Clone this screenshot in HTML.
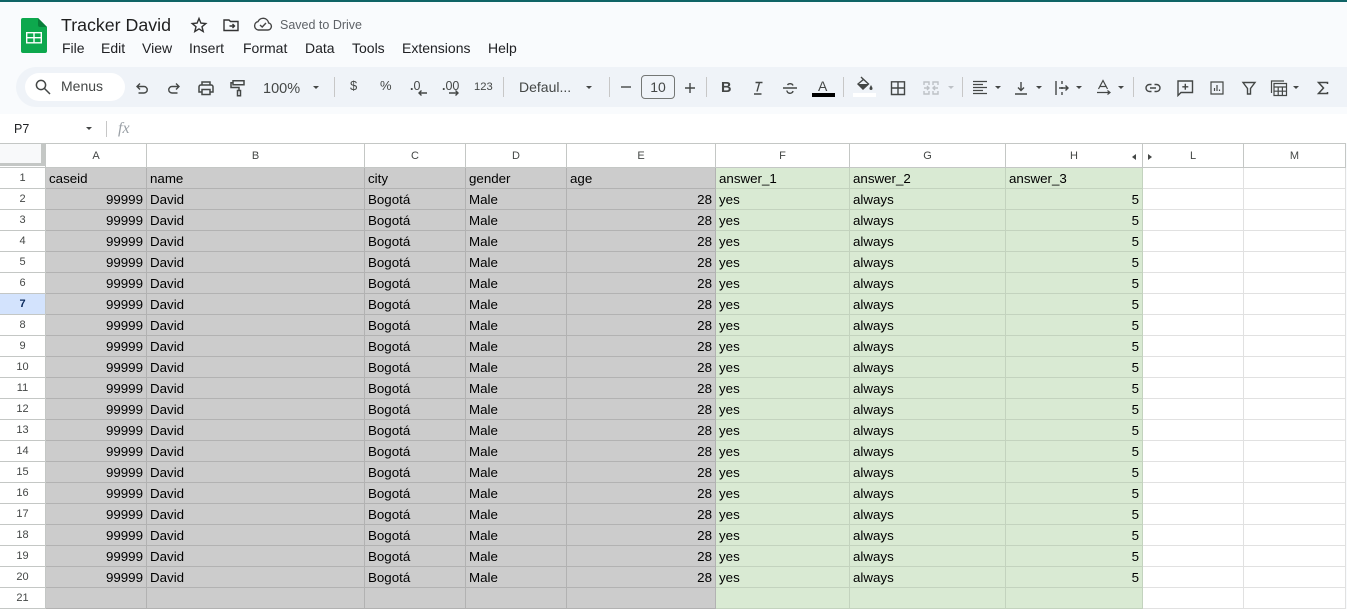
<!DOCTYPE html>
<html lang="en">
<head>
<meta charset="utf-8">
<title>Tracker David</title>
<style>
html,body{margin:0;padding:0;width:1347px;height:606px;overflow:hidden;background:#f9fbfd;font-family:"Liberation Sans",Arial,sans-serif;color:#1f1f1f}
.a{position:absolute;white-space:nowrap}
#topbar{left:0;top:0;width:1347px;height:2px;background:#0f6466}
.m{top:40px;font-size:14px;line-height:17px;color:#202124}
#tb{left:16px;top:67px;width:1331px;height:40px;background:#eff3f8;border-radius:20px 0 0 20px}
#search{left:25px;top:73px;width:100px;height:28px;background:#fff;border-radius:14px}
.t{color:#444746;font-size:14px;line-height:16px}
.sep{top:77px;width:1px;height:20px;background:#c7c7c7}
svg.i{position:absolute;fill:none;stroke:#444746;stroke-width:1.4}
.car{position:absolute;width:0;height:0;border-left:3.5px solid transparent;border-right:3.5px solid transparent;border-top:3.5px solid #444746;top:86px}
#fx{left:0;top:114px;width:1347px;height:29px;background:#fff}
table{position:absolute;left:0;top:143px;border-collapse:separate;border-spacing:0;table-layout:fixed;width:1346px;font-size:13.33px;background:#fff}
td,th{box-sizing:border-box;padding:0;overflow:hidden;white-space:nowrap;font-weight:normal}
thead th{height:25px;border-top:1px solid #c4c7c5;border-right:1px solid #c4c7c5;border-bottom:1px solid #c4c7c5;background:#fff;font-size:11px;color:#444746;padding-top:1px}
tbody th{height:21px;border-right:1px solid #c4c7c5;border-bottom:1px solid #c4c7c5;background:#fff;font-size:11px;color:#444746}
td{height:21px;border-right:1px solid #e1e1e1;border-bottom:1px solid #e1e1e1;padding:2px 3px 0;color:#000;line-height:18px}
td.g{background:#cccccc;border-color:#b2b2b2}
td.v{background:#d9ead3;border-color:#c3d3be}
td.r{text-align:right}
tr.s th{background:#d3e3fd;font-weight:bold;color:#0b2a5c}
</style>
</head>
<body>
<div class="a" id="topbar"></div>

<svg class="a" style="left:21px;top:18px" width="26" height="35" viewBox="0 0 26 35"><path d="M2 0H17L26 9V33a2 2 0 0 1-2 2H2a2 2 0 0 1-2-2V2A2 2 0 0 1 2 0Z" fill="#0da84d"/><path d="M17 0L26 9H19a2 2 0 0 1-2-2Z" fill="#087f3a"/><path d="M5 14H21V25.5H5Z M6.4 15.4V19H12.3V15.4Z M13.7 15.4V19H19.6V15.4Z M6.4 20.4V24.1H12.3V20.4Z M13.7 20.4V24.1H19.6V20.4Z" fill="#fff" fill-rule="evenodd"/></svg>

<div class="a" style="left:61px;top:14px;font-size:17.8px;line-height:22px;color:#1f1f1f">Tracker David</div>
<svg class="i" style="left:190px;top:16px;stroke:#333;stroke-width:1.4" width="18" height="18" viewBox="0 0 18 18"><path d="M9 2.5L10.9 7.1L15.8 7.5L12 10.7L13.2 15.5L9 12.9L4.8 15.5L6 10.7L2.2 7.5L7.1 7.1Z"/></svg>
<svg class="i" style="left:222px;top:16px;stroke:#333;stroke-width:1.4" width="18" height="18" viewBox="0 0 18 18"><path d="M2 4H7L8.5 5.5H16V14.5H2Z M7.5 10H12 M10.5 8L12.5 10L10.5 12"/></svg>
<svg class="i" style="left:253px;top:15px;stroke:#444;stroke-width:1.4" width="20" height="18" viewBox="0 0 20 18"><path d="M5 15H15a3.6 3.6 0 0 0 .6-7.1A5.6 5.6 0 0 0 5 6.6A4.3 4.3 0 0 0 5 15Z M7 10L9.2 12L13 8"/></svg>
<div class="a" style="left:280px;top:17px;font-size:12.5px;line-height:16px;color:#5f6368">Saved to Drive</div>

<div class="a m" style="left:62px">File</div>
<div class="a m" style="left:101px">Edit</div>
<div class="a m" style="left:142px">View</div>
<div class="a m" style="left:189px">Insert</div>
<div class="a m" style="left:243px">Format</div>
<div class="a m" style="left:305px">Data</div>
<div class="a m" style="left:352px">Tools</div>
<div class="a m" style="left:402px">Extensions</div>
<div class="a m" style="left:488px">Help</div>

<div class="a" id="tb"></div>
<div class="a" id="search"></div>
<svg class="i" style="left:34px;top:78px;stroke-width:1.5" width="18" height="18" viewBox="0 0 18 18"><circle cx="7" cy="7" r="4.6"/><path d="M10.5 10.5L16 16"/></svg>
<div class="a t" style="left:61px;top:78px">Menus</div>

<svg class="i" style="left:133px;top:79px" width="18" height="18" viewBox="0 0 18 18"><path d="M7 4.5L4 7.5L7 10.5 M4 7.5H11a3.2 3.2 0 0 1 0 6.5H5.5"/></svg>
<svg class="i" style="left:165px;top:79px" width="18" height="18" viewBox="0 0 18 18"><path d="M11 4.5L14 7.5L11 10.5 M14 7.5H7a3.2 3.2 0 0 0 0 6.5H12.5"/></svg>
<svg class="i" style="left:197px;top:79px;stroke-width:1.5" width="18" height="18" viewBox="0 0 18 18"><path d="M5 6V3H13V6 M5 13H2V7.8A1.8 1.8 0 0 1 3.8 6H14.2A1.8 1.8 0 0 1 16 7.8V13H13 M5 10.5H13V15.5H5Z"/></svg>
<svg class="i" style="left:229px;top:79px;stroke-width:1.5" width="18" height="18" viewBox="0 0 18 18"><path d="M4 1.8H15V5.8H4Z M4 3.8H2V8.5H10V11.5 M8.5 11.5H11.5V16.8H8.5Z"/></svg>
<div class="a t" style="left:263px;top:81px;font-size:14.5px">100%</div>
<div class="car" style="left:313px"></div>
<div class="a sep" style="left:334px"></div>
<div class="a t" style="left:350px;top:78px;font-size:13px">$</div>
<div class="a t" style="left:380px;top:78px;font-size:13px">%</div>
<div class="a t" style="left:410px;top:78px;font-size:12.5px"><b>.</b>0</div>
<svg class="i" style="left:416px;top:88px" width="12" height="10" viewBox="0 0 12 10"><path d="M11 5H3 M5.5 2.5L3 5L5.5 7.5"/></svg>
<div class="a t" style="left:442px;top:78px;font-size:12.5px"><b>.</b>00</div>
<svg class="i" style="left:447px;top:88px" width="14" height="10" viewBox="0 0 14 10"><path d="M2 5H11 M8.5 2.5L11 5L8.5 7.5"/></svg>
<div class="a t" style="left:474px;top:79px;font-size:11.2px">123</div>
<div class="a sep" style="left:503px"></div>
<div class="a t" style="left:519px;top:79px;font-size:14px">Defaul...</div>
<div class="car" style="left:586px"></div>
<div class="a sep" style="left:609px"></div>
<svg class="i" style="left:619px;top:80px" width="14" height="14" viewBox="0 0 14 14"><path d="M2 7H12"/></svg>
<div class="a t" style="left:641px;top:75px;width:32px;height:22px;border:1px solid #747775;border-radius:4px;text-align:center;line-height:22px;font-size:14px">10</div>
<svg class="i" style="left:683px;top:81px" width="14" height="14" viewBox="0 0 14 14"><path d="M2 7H12 M7 2V12"/></svg>
<div class="a sep" style="left:706px"></div>
<div class="a t" style="left:721px;top:80px;font-size:14.5px;font-weight:bold">B</div>
<svg class="i" style="left:750px;top:80px" width="16" height="16" viewBox="0 0 16 16"><path d="M5.5 2.5H12.5 M9.5 2.5L7 11.5 M4 14H11.5"/></svg>
<svg class="i" style="left:782px;top:80px" width="16" height="16" viewBox="0 0 16 16"><path d="M1 8H15 M11 5.5A3 2.5 0 0 0 5.5 5 M5 10.5A3 2.5 0 0 0 11 11"/></svg>
<div class="a t" style="left:818px;top:78px;font-size:14px">A</div>
<div class="a" style="left:812px;top:93px;width:23px;height:4px;background:#000"></div>
<div class="a sep" style="left:843px"></div>
<svg class="a" style="left:856px;top:76px" width="18" height="16" viewBox="0 0 18 16"><path d="M5 1L6 2L12.5 8L7 13L2 8L8 3" fill="none" stroke="#444746" stroke-width="1.4"/><path d="M2.5 8H12.5L7 13Z" fill="#444746"/><path d="M15 9C16 11 16.5 11.5 16.5 12.5A1.5 1.5 0 0 1 13.5 12.5C13.5 11.5 14 11 15 9Z" fill="#444746"/></svg>
<div class="a" style="left:853px;top:93px;width:23px;height:4px;background:#fff"></div>
<svg class="i" style="left:889px;top:79px" width="18" height="18" viewBox="0 0 18 18"><path d="M2.5 2.8H15.5V15.5H2.5Z M9 2.8V15.5 M2.5 9H15.5"/></svg>
<svg class="i" style="left:922px;top:80px;stroke:#bdc1c6" width="18" height="16" viewBox="0 0 18 16"><path d="M2 5V2H7V5 M11 5V2H16V5 M2 11V14H7V11 M11 11V14H16V11 M2 8H7 M5 6L7 8L5 10 M16 8H11 M13 6L11 8L13 10"/></svg>
<div class="car" style="left:948px;border-top-color:#bdc1c6"></div>
<div class="a sep" style="left:962px"></div>
<svg class="i" style="left:972px;top:80px;stroke-width:1.2" width="16" height="16" viewBox="0 0 16 16"><path d="M1 1.5H15 M1 4.5H11 M1 7.5H15 M1 10.5H11 M1 13.5H15"/></svg>
<div class="car" style="left:995px"></div>
<svg class="i" style="left:1013px;top:80px" width="16" height="16" viewBox="0 0 16 16"><path d="M8 2V10.5 M5 7.5L8 10.5L11 7.5 M2 14H14"/></svg>
<div class="car" style="left:1036px"></div>
<svg class="i" style="left:1054px;top:80px" width="16" height="16" viewBox="0 0 16 16"><path d="M2 1V15 M8 1V4 M8 7V9 M8 12V15 M5 8H14 M11.5 5.5L14 8L11.5 10.5"/></svg>
<div class="car" style="left:1076px"></div>
<svg class="i" style="left:1096px;top:79px;stroke-width:1.2" width="16" height="18" viewBox="0 0 16 18"><path d="M2.5 10L7 1.5L11.5 10 M4 7.5H10 M1 13.5H13.5 M11.5 11.5L14 13.5L11.5 15.5"/></svg>
<div class="car" style="left:1118px"></div>
<div class="a sep" style="left:1133px"></div>
<svg class="i" style="left:1144px;top:79px" width="18" height="18" viewBox="0 0 18 18"><path d="M7.5 5.5H5.5a3.5 3.5 0 0 0 0 7H7.5 M10.5 5.5H12.5a3.5 3.5 0 0 1 0 7H10.5 M6 9H12"/></svg>
<svg class="i" style="left:1176px;top:79px" width="18" height="18" viewBox="0 0 18 18"><path d="M2 2H16.5V13.5H5L2 16.5Z M9.3 4.8V10.8 M6.3 7.8H12.3"/></svg>
<svg class="i" style="left:1208px;top:79px;stroke-width:1.2" width="18" height="18" viewBox="0 0 18 18"><path d="M3 3H15V15H3Z M6.5 12V9 M9 12V6 M11.5 12V10.5"/></svg>
<svg class="i" style="left:1240px;top:79px" width="18" height="18" viewBox="0 0 18 18"><path d="M3 3.5H15L10.5 9.5V15H7.5V9.5Z"/></svg>
<svg class="i" style="left:1270px;top:79px;stroke-width:1.2" width="18" height="18" viewBox="0 0 18 18"><path d="M1.5 14V2H14 M4 4.5H16.5V16.5H4Z M4 8H16.5 M4 12.2H16.5 M8.2 8V16.5 M12.4 8V16.5"/></svg>
<div class="car" style="left:1293px"></div>
<svg class="i" style="left:1315px;top:80px;stroke-width:1.5" width="16" height="16" viewBox="0 0 16 16"><path d="M12.5 4V2.5H3.5L8.5 8L3.5 13.5H12.5V12"/></svg>

<div class="a" id="fx"></div>
<div class="a" style="left:14px;top:121px;font-size:12.5px;line-height:16px;color:#202124">P7</div>
<div class="car" style="left:86px;top:127px"></div>
<div class="a" style="left:106px;top:121px;width:1px;height:16px;background:#c7c7c7"></div>
<div class="a" style="left:118px;top:120px;font-family:'Liberation Serif',serif;font-style:italic;font-size:16px;line-height:18px;color:#9aa0a6">fx</div>

<table>
<colgroup><col style="width:46px"><col style="width:101px"><col style="width:218px"><col style="width:101px"><col style="width:101px"><col style="width:149px"><col style="width:134px"><col style="width:156px"><col style="width:137px"><col style="width:101px"><col style="width:102px"></colgroup>
<thead><tr><th style="background:#fff"></th><th>A</th><th>B</th><th>C</th><th>D</th><th>E</th><th>F</th><th>G</th><th>H</th><th>L</th><th>M</th></tr></thead>
<tbody>
<tr><th>1</th><td class="g">caseid</td><td class="g">name</td><td class="g">city</td><td class="g">gender</td><td class="g">age</td><td class="v">answer_1</td><td class="v">answer_2</td><td class="v">answer_3</td><td></td><td></td></tr>
<tr><th>2</th><td class="g r">99999</td><td class="g">David</td><td class="g">Bogotá</td><td class="g">Male</td><td class="g r">28</td><td class="v">yes</td><td class="v">always</td><td class="v r">5</td><td></td><td></td></tr>
<tr><th>3</th><td class="g r">99999</td><td class="g">David</td><td class="g">Bogotá</td><td class="g">Male</td><td class="g r">28</td><td class="v">yes</td><td class="v">always</td><td class="v r">5</td><td></td><td></td></tr>
<tr><th>4</th><td class="g r">99999</td><td class="g">David</td><td class="g">Bogotá</td><td class="g">Male</td><td class="g r">28</td><td class="v">yes</td><td class="v">always</td><td class="v r">5</td><td></td><td></td></tr>
<tr><th>5</th><td class="g r">99999</td><td class="g">David</td><td class="g">Bogotá</td><td class="g">Male</td><td class="g r">28</td><td class="v">yes</td><td class="v">always</td><td class="v r">5</td><td></td><td></td></tr>
<tr><th>6</th><td class="g r">99999</td><td class="g">David</td><td class="g">Bogotá</td><td class="g">Male</td><td class="g r">28</td><td class="v">yes</td><td class="v">always</td><td class="v r">5</td><td></td><td></td></tr>
<tr class="s"><th>7</th><td class="g r">99999</td><td class="g">David</td><td class="g">Bogotá</td><td class="g">Male</td><td class="g r">28</td><td class="v">yes</td><td class="v">always</td><td class="v r">5</td><td></td><td></td></tr>
<tr><th>8</th><td class="g r">99999</td><td class="g">David</td><td class="g">Bogotá</td><td class="g">Male</td><td class="g r">28</td><td class="v">yes</td><td class="v">always</td><td class="v r">5</td><td></td><td></td></tr>
<tr><th>9</th><td class="g r">99999</td><td class="g">David</td><td class="g">Bogotá</td><td class="g">Male</td><td class="g r">28</td><td class="v">yes</td><td class="v">always</td><td class="v r">5</td><td></td><td></td></tr>
<tr><th>10</th><td class="g r">99999</td><td class="g">David</td><td class="g">Bogotá</td><td class="g">Male</td><td class="g r">28</td><td class="v">yes</td><td class="v">always</td><td class="v r">5</td><td></td><td></td></tr>
<tr><th>11</th><td class="g r">99999</td><td class="g">David</td><td class="g">Bogotá</td><td class="g">Male</td><td class="g r">28</td><td class="v">yes</td><td class="v">always</td><td class="v r">5</td><td></td><td></td></tr>
<tr><th>12</th><td class="g r">99999</td><td class="g">David</td><td class="g">Bogotá</td><td class="g">Male</td><td class="g r">28</td><td class="v">yes</td><td class="v">always</td><td class="v r">5</td><td></td><td></td></tr>
<tr><th>13</th><td class="g r">99999</td><td class="g">David</td><td class="g">Bogotá</td><td class="g">Male</td><td class="g r">28</td><td class="v">yes</td><td class="v">always</td><td class="v r">5</td><td></td><td></td></tr>
<tr><th>14</th><td class="g r">99999</td><td class="g">David</td><td class="g">Bogotá</td><td class="g">Male</td><td class="g r">28</td><td class="v">yes</td><td class="v">always</td><td class="v r">5</td><td></td><td></td></tr>
<tr><th>15</th><td class="g r">99999</td><td class="g">David</td><td class="g">Bogotá</td><td class="g">Male</td><td class="g r">28</td><td class="v">yes</td><td class="v">always</td><td class="v r">5</td><td></td><td></td></tr>
<tr><th>16</th><td class="g r">99999</td><td class="g">David</td><td class="g">Bogotá</td><td class="g">Male</td><td class="g r">28</td><td class="v">yes</td><td class="v">always</td><td class="v r">5</td><td></td><td></td></tr>
<tr><th>17</th><td class="g r">99999</td><td class="g">David</td><td class="g">Bogotá</td><td class="g">Male</td><td class="g r">28</td><td class="v">yes</td><td class="v">always</td><td class="v r">5</td><td></td><td></td></tr>
<tr><th>18</th><td class="g r">99999</td><td class="g">David</td><td class="g">Bogotá</td><td class="g">Male</td><td class="g r">28</td><td class="v">yes</td><td class="v">always</td><td class="v r">5</td><td></td><td></td></tr>
<tr><th>19</th><td class="g r">99999</td><td class="g">David</td><td class="g">Bogotá</td><td class="g">Male</td><td class="g r">28</td><td class="v">yes</td><td class="v">always</td><td class="v r">5</td><td></td><td></td></tr>
<tr><th>20</th><td class="g r">99999</td><td class="g">David</td><td class="g">Bogotá</td><td class="g">Male</td><td class="g r">28</td><td class="v">yes</td><td class="v">always</td><td class="v r">5</td><td></td><td></td></tr>
<tr><th>21</th><td class="g"></td><td class="g"></td><td class="g"></td><td class="g"></td><td class="g"></td><td class="v"></td><td class="v"></td><td class="v"></td><td></td><td></td></tr>
</tbody>
</table>
<div class="a" style="left:0;top:144px;width:41px;height:19px;background:#f8f9fa;border-right:4px solid #c4c7c5;border-bottom:3px solid #c4c7c5"></div>
<div class="a" style="left:1132px;top:154px;width:0;height:0;border-top:3px solid transparent;border-bottom:3px solid transparent;border-right:4px solid #444746"></div>
<div class="a" style="left:1148px;top:154px;width:0;height:0;border-top:3px solid transparent;border-bottom:3px solid transparent;border-left:4px solid #444746"></div>
</body>
</html>
